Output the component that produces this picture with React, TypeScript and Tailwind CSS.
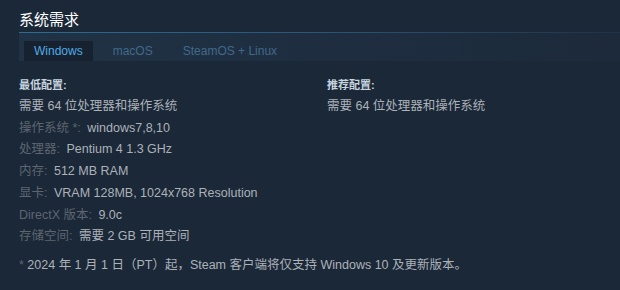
const font = "font-['Liberation_Sans','Noto_Sans_CJK_SC',Arial,sans-serif]"

const minimum: [string, string][] = [
  ['操作系统 *:', 'windows7,8,10'],
  ['处理器:', 'Pentium 4 1.3 GHz'],
  ['内存:', '512 MB RAM'],
  ['显卡:', 'VRAM 128MB, 1024x768 Resolution'],
  ['DirectX 版本:', '9.0c'],
  ['存储空间:', '需要 2 GB 可用空间'],
]

const tabs = ['Windows', 'macOS', 'SteamOS + Linux']

export default function App() {
  return (
    <div className={`w-[620px] h-[290px] bg-[#1b2838] pl-[19px] ${font}`}>
      <div className="pt-[10px] pb-[3px] text-[15px] leading-[19px] text-white">系统需求</div>

      <div className="h-px bg-gradient-to-r from-[#2e6a94] via-[#285677] to-[#1f3447]" />
      <div className="h-[28px] bg-gradient-to-r from-[#203245] to-[#1c2a3b] flex items-end pl-[5px] gap-[10px]">
        {tabs.map((t, i) => (
          <div
            key={t}
            className={
              i === 0
                ? 'h-[20px] px-[10px] bg-[#162230] text-[12px] leading-[20px] text-[#52abe6]'
                : 'h-[20px] px-[10px] text-[12px] leading-[20px] text-[#41698b]'
            }
          >
            {t}
          </div>
        ))}
      </div>

      <div className="flex pt-[16px] text-[12.5px]">
        <div className="w-[308px]">
          <div className="text-[11px] leading-[16px] font-bold text-[#c6d4df]">最低配置:</div>
          <ul className="mt-[3px]">
            <li className="leading-[21.7px] text-[#acb2b8]">需要 64 位处理器和操作系统</li>
            {minimum.map(([k, v]) => (
              <li key={k} className="leading-[21.7px]">
                <span className="text-[#5d6670]">{k}</span>{' '}
                <span className="ml-[3px] text-[#acb2b8]">{v}</span>
              </li>
            ))}
          </ul>
        </div>
        <div className="w-[292px]">
          <div className="text-[11px] leading-[16px] font-bold text-[#c6d4df]">推荐配置:</div>
          <ul className="mt-[3px]">
            <li className="leading-[21.7px] text-[#acb2b8]">需要 64 位处理器和操作系统</li>
          </ul>
        </div>
      </div>

      <div className="mt-[8px] text-[12.5px] leading-[18px] text-[#acb2b8]">
        <span className="text-[#5d6670]">*</span> 2024 年 1 月 1 日（PT）起，Steam 客户端将仅支持 Windows 10 及更新版本。
      </div>
    </div>
  )
}
